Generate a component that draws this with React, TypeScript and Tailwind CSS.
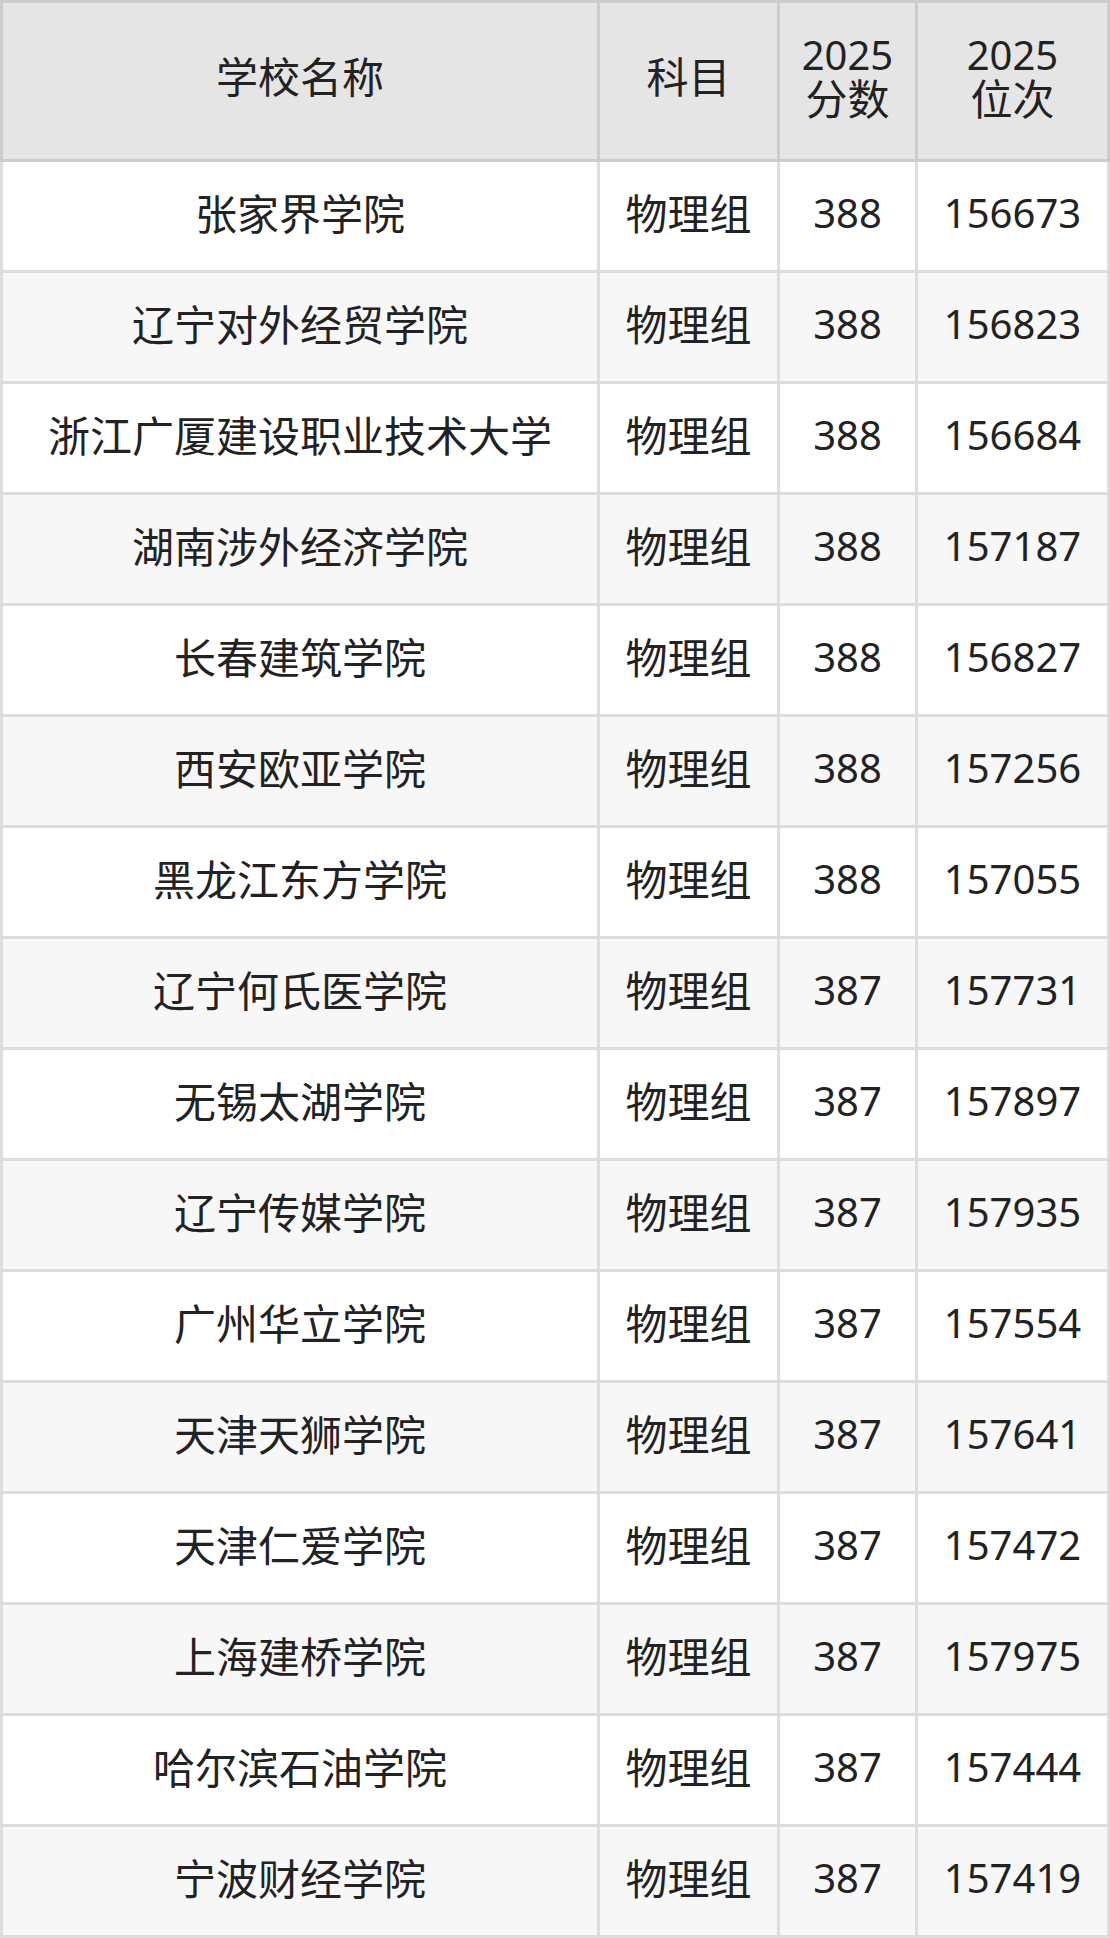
import React from "react";

const rows: [string, string, string, string][] = [
  ["张家界学院", "物理组", "388", "156673"],
  ["辽宁对外经贸学院", "物理组", "388", "156823"],
  ["浙江广厦建设职业技术大学", "物理组", "388", "156684"],
  ["湖南涉外经济学院", "物理组", "388", "157187"],
  ["长春建筑学院", "物理组", "388", "156827"],
  ["西安欧亚学院", "物理组", "388", "157256"],
  ["黑龙江东方学院", "物理组", "388", "157055"],
  ["辽宁何氏医学院", "物理组", "387", "157731"],
  ["无锡太湖学院", "物理组", "387", "157897"],
  ["辽宁传媒学院", "物理组", "387", "157935"],
  ["广州华立学院", "物理组", "387", "157554"],
  ["天津天狮学院", "物理组", "387", "157641"],
  ["天津仁爱学院", "物理组", "387", "157472"],
  ["上海建桥学院", "物理组", "387", "157975"],
  ["哈尔滨石油学院", "物理组", "387", "157444"],
  ["宁波财经学院", "物理组", "387", "157419"],
];

const cols = "grid grid-cols-[594px_177px_135px_189px] gap-[3px]";

const isNum = (s: string) => /^[0-9]+$/.test(s);

export default function App() {
  return (
    <div
      className="w-[1110px] text-[#222222]"
      style={{ fontFamily: '"Noto Sans", "Noto Sans CJK SC", sans-serif' }}
    >
      <div className={`${cols} bg-[#cccccc] p-[3px]`}>
        {[["学校名称"], ["科目"], ["2025", "分数"], ["2025", "位次"]].map((lines, i) => (
          <div
            key={i}
            className="h-[156px] bg-[#e5e5e5] flex flex-col items-center justify-center pb-[8px] text-center"
          >
            {lines.map((l, j) => (
              <div
                key={j}
                className={`h-[44px] flex items-center leading-none ${
                  isNum(l) ? "text-[40px]" : "text-[42px]"
                }`}
              >
                {l}
              </div>
            ))}
          </div>
        ))}
      </div>
      <div className={`${cols} bg-[#dddddd] px-[3px] pb-[3px]`}>
        {rows.map((r, ri) =>
          r.map((c, ci) => (
            <div
              key={`${ri}-${ci}`}
              className={`h-[108px] flex items-center justify-center whitespace-nowrap pb-[6px] ${
                isNum(c) ? "text-[40px]" : "text-[42px]"
              } ${ri % 2 === 0 ? "bg-white" : "bg-[#f7f7f7]"}`}
            >
              {c}
            </div>
          ))
        )}
      </div>
    </div>
  );
}
